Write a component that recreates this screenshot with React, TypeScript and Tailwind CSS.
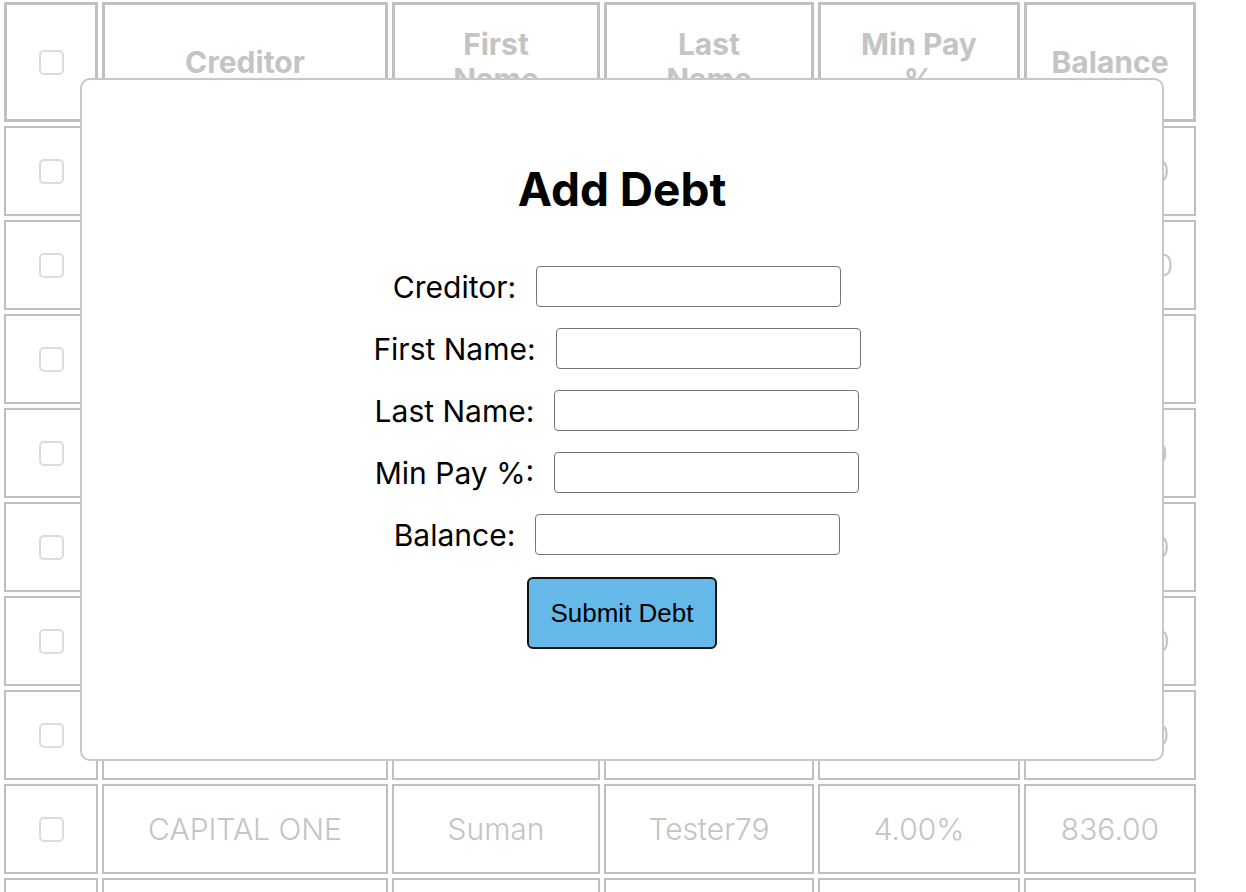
import React from "react";

const rows = [
  ["CHASE", "Suman", "Tester72", "3.00%", "1,250.00"],
  ["DISCOVER", "Suman", "Tester73", "2.50%", "2,480.00"],
  ["AMEX", "Suman", "Tester74", "2.00%", "95.00"],
  ["CITI", "Suman", "Tester75", "3.50%", "3,120.00"],
  ["WELLS FARGO", "Suman", "Tester76", "2.00%", "1,640.00"],
  ["BARCLAYS", "Suman", "Tester77", "4.00%", "2,210.00"],
  ["SYNCHRONY", "Suman", "Tester78", "3.00%", "1,905.00"],
  ["CAPITAL ONE", "Suman", "Tester79", "4.00%", "836.00"],
  ["", "", "", "", ""],
];

const headers = ["Creditor", "First Name", "Last Name", "Min Pay %", "Balance"];

function Box() {
  return <div className="w-[25px] h-[25px] rounded-[5px] border-2 border-[#dcdcdc] bg-white" />;
}

function Field({ label }: { label: string }) {
  return (
    <div className="flex items-center gap-[20px] mr-[10px]">
      <label className="text-[30px] leading-none text-black">{label}</label>
      <div className="w-[305px] h-[41px] rounded-[4px] border-[1.5px] border-[#767676] bg-white" />
    </div>
  );
}

export default function App() {
  return (
    <div
      className="relative w-[1246px] h-[892px] overflow-hidden bg-white"
      style={{ fontFamily: "Inter, 'Noto Sans', sans-serif" }}
    >
      <div className="grid grid-cols-[94px_286px_208px_210px_202px_172px] gap-[4px] px-[4px] pt-[2px] w-[1200px] text-[#c4c4c4]">
        <div className="h-[120px] border-[3px] border-[#c0c0c0] flex items-center justify-center">
          <Box />
        </div>
        {headers.map((h) => (
          <div
            key={h}
            className="h-[120px] border-[3px] border-[#c0c0c0] flex items-center justify-center text-center font-bold text-[30px] leading-[35px]"
          >
            <span className="max-w-[140px]">{h}</span>
          </div>
        ))}
        {rows.map((r, i) => (
          <React.Fragment key={i}>
            <div className="h-[90px] border-2 border-[#c0c0c0] flex items-center justify-center">
              <Box />
            </div>
            {r.map((c, j) => (
              <div
                key={j}
                className="h-[90px] border-2 border-[#c0c0c0] flex items-center justify-center text-[30px] font-light whitespace-nowrap"
              >
                {c}
              </div>
            ))}
          </React.Fragment>
        ))}
      </div>

      <div className="absolute top-[78px] left-[80px] w-[1084px] h-[683px] bg-white border-2 border-[#c8c8c8] rounded-[10px] flex flex-col items-center pt-[81px]">
        <h2 className="text-[46px] leading-[56px] font-bold text-black">Add Debt</h2>
        <div className="mt-[49px] flex flex-col items-center gap-[21px]">
          <Field label="Creditor:" />
          <Field label="First Name:" />
          <Field label="Last Name:" />
          <Field label="Min Pay %:" />
          <Field label="Balance:" />
        </div>
        <button
          className="mt-[22px] w-[190px] h-[72px] rounded-[6px] border-2 border-[#111111] bg-[#64b9e8] text-[26px] text-black"
          style={{ fontFamily: "'Liberation Sans', Arial, sans-serif" }}
        >
          Submit Debt
        </button>
      </div>
    </div>
  );
}
